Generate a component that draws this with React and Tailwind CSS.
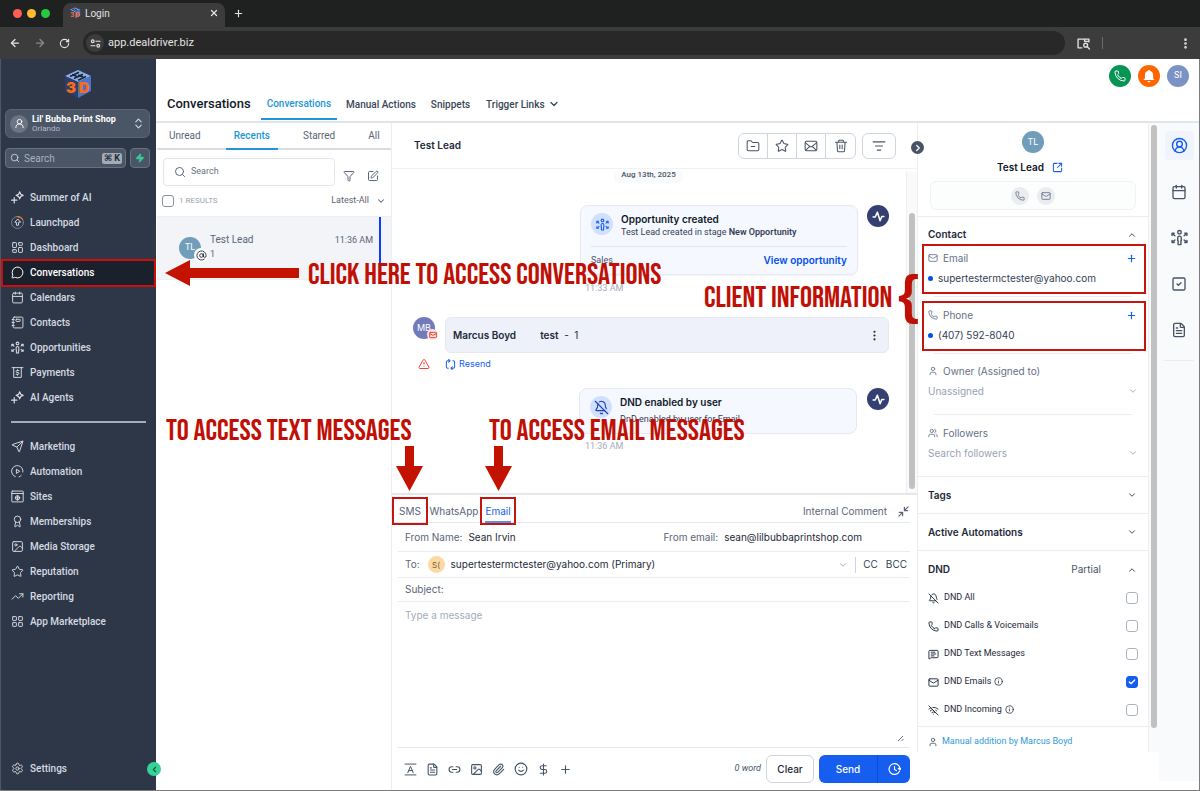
import {
    ArrowLeft, ArrowRight, AtSign, Award, BellOff, Calendar, Check, ChevronDown, ChevronLeft, ChevronRight, ChevronUp,
    ChevronsUpDown, CircleUserRound, DollarSign, EllipsisVertical, FileText, FolderMinus, Funnel,
    Image, Info, LayoutDashboard, LayoutGrid, Link2, ListFilter, Mail, MessageCircle, MessageSquareText,
    Paperclip, Phone, Plus, RotateCw, Search, Send, Settings, Smile, SquareArrowOutUpRight, SquareCheck, SquarePen,
    Star, TrendingUp, TriangleAlert, User, UserRound, Users, WifiOff, X, Zap
} from "lucide-react";

function Icon({ children, size = 13, className = "" }) {
    return (
        <svg width={size} height={size} viewBox="0 0 24 24" fill="none" stroke="currentColor" strokeWidth="1.8" strokeLinecap="round" strokeLinejoin="round" className={className}>
            {children}
        </svg>
    );
}

const SparkIcon = (props) => (
    <Icon {...props}>
        <path d="M16 1.500l2 4.500 4.500 2-4.500 2-2 4.500-2-4.500-4.500-2 4.500-2z" strokeWidth="2.200" />
        <path d="M6 12v10M1 17h10" strokeWidth="2.200" />
    </Icon>
);

const LaunchIcon = (props) => (
    <Icon {...props}>
        <circle cx="12" cy="12" r="11" stroke="#7a8594" />
        <path d="M12 1a11 11 0 0 1 9.500 5.500" stroke="#e07b39" strokeWidth="2.200" />
        <path d="M12 6l-5 5.500h3v5.500h4v-5.500h3z" />
    </Icon>
);

const PeopleIcon = (props) => (
    <Icon {...props}>
        <circle cx="12" cy="4.500" r="2.500" strokeWidth="2" />
        <path d="M12 10a2.500 2.500 0 0 1 2.500 2.500v4H14V22h-4v-5.500h-.5v-4A2.500 2.500 0 0 1 12 10z" strokeWidth="2" />
        <path d="M5.500 9.500L2 6.500M1.500 9V6H4.500M18.500 9.500L22 6.500M22.500 9V6H19.500M5.500 15.500L2 18.500M1.500 16v3H4.500M18.500 15.500L22 18.500M22.500 16v3H19.500" strokeWidth="2" />
    </Icon>
);

const NotebookIcon = (props) => (
    <Icon {...props}>
        <rect x="4" y="2" width="18" height="20" rx="2" />
        <rect x="9" y="6" width="8" height="4" rx="1" />
        <path d="M2 6.500h4M2 12h4M2 17.500h4" />
    </Icon>
);

const PaymentIcon = (props) => (
    <Icon {...props}>
        <path d="M2 3h20M5 3v18h14V3" />
        <path d="M14.500 8.500h-3.500a1.700 1.700 0 0 0 0 3.400h2a1.700 1.700 0 0 1 0 3.400H9.500M12 7v1.500M12 15.500V17" />
    </Icon>
);

const PlayIcon = (props) => (
    <Icon {...props}>
        <path d="M8 21.500A10.500 10.500 0 1 1 22 13M15 22a10 10 0 0 0 4-3" />
        <path d="M10 8.500v7l5.500-3.500z" />
    </Icon>
);

const SiteIcon = (props) => (
    <Icon {...props}>
        <rect x="1.500" y="2" width="21" height="20" rx="1" />
        <path d="M1.500 6.500h21" />
        <circle cx="12" cy="14.500" r="4" />
        <path d="M8 14.500h8M12 10.500v8" />
    </Icon>
);

const TabSearchIcon = (props) => (
    <Icon {...props}>
        <path d="M9 20H2V4h20v5M14 4v4h8" strokeWidth="2.500" />
        <circle cx="16" cy="15" r="3.500" strokeWidth="2.500" />
        <path d="M19 18l4 4" strokeWidth="2.500" />
    </Icon>
);

const TuneIcon = (props) => (
    <Icon {...props}>
        <circle cx="6" cy="7" r="3" strokeWidth="2.500" />
        <circle cx="18" cy="17" r="3" strokeWidth="2.500" />
        <path d="M13 7h9M2 17h9" strokeWidth="2.500" />
    </Icon>
);

const TextFormatIcon = (props) => (
    <Icon {...props}>
        <path d="M2 2h20M2 22h20M7 18l5-12 5 12M8.700 14h6.600" />
    </Icon>
);

const EnvelopeIcon = (props) => (
    <Icon {...props}>
        <rect x="2" y="4" width="20" height="16" rx="2.500" />
        <path d="M2.500 6.500l7.500 6a3 3 0 0 0 4 0l7.500-6M3 19l6.500-6M21 19l-6.500-6" />
    </Icon>
);

const BinIcon = (props) => (
    <Icon {...props}>
        <path d="M2.500 5.500h19M8 5.500V3a1 1 0 0 1 1-1h6a1 1 0 0 1 1 1v2.500M5 5.500l1 14.500a2 2 0 0 0 2 2h8a2 2 0 0 0 2-2l1-14.500M10 10.500v6M14 10.500v6" />
    </Icon>
);

const ResendIcon = (props) => (
    <Icon {...props}>
        <path d="M10 4H6a3 3 0 0 0-3 3v10a3 3 0 0 0 3 3h1M14 20h4a3 3 0 0 0 3-3V7a3 3 0 0 0-3-3h-1" strokeWidth="2.200" />
        <path d="M8 1l3 3-3 3M16 17l-3 3 3 3" strokeWidth="2.200" />
    </Icon>
);

const ShrinkIcon = (props) => (
    <Icon {...props}>
        <path d="M22 2l-7 7M2 22l7-7" strokeWidth="2.500" />
        <path d="M14 3v7h7M3 14h7v7" strokeWidth="2.800" />
    </Icon>
);

const ScheduleIcon = (props) => (
    <Icon {...props}>
        <path d="M21 15.500A10 10 0 1 1 22 11M12 6.500V12l3.500 2M19 10l3 2.500L24 9.500" strokeWidth="2.200" />
    </Icon>
);

const PulseIcon = (props) => (
    <Icon {...props}>
        <path d="M2 13h4l4-9 5 16 3-8h4" strokeWidth="2.800" />
    </Icon>
);

function Logo({ size }) {
    return (
        <svg width={size} height={size} viewBox="0 0 30 30">
            <path d="M15 1L28 7v15L15 29 2 22V7z" fill="#1f3c78" />
            <path d="M15 1L28 7 15 13 2 7z" fill="#8eb0e6" />
            <path d="M15 13L28 7v15L15 29z" fill="#4a76c4" />
            <path d="M2 7l13 6v16L2 22z" fill="#2a3f6b" />
            <path d="M7 7.500l9-4.200M11 9.500l9-4.200M15 11.300l8-3.800M9 5.500l5 2M15 6l5 2" stroke="#1c2536" strokeWidth="1.700" />
            <text x="3" y="24" fontSize="15" fontWeight="900" fontFamily="Inter, sans-serif" fill="#ff6a13">3</text>
            <text x="15.500" y="24" fontSize="15" fontWeight="900" fontFamily="Inter, sans-serif" fill="#ff6a13">D</text>
        </svg>
    );
}

const mainNav = [
    { label: "Summer of AI", icon: SparkIcon },
    { label: "Launchpad", icon: LaunchIcon },
    { label: "Dashboard", icon: LayoutDashboard },
    { label: "Conversations", icon: MessageCircle, active: true },
    { label: "Calendars", icon: Calendar },
    { label: "Contacts", icon: NotebookIcon },
    { label: "Opportunities", icon: PeopleIcon },
    { label: "Payments", icon: PaymentIcon },
    { label: "AI Agents", icon: SparkIcon },
];

const toolsNav = [
    { label: "Marketing", icon: Send },
    { label: "Automation", icon: PlayIcon },
    { label: "Sites", icon: SiteIcon },
    { label: "Memberships", icon: Award },
    { label: "Media Storage", icon: Image },
    { label: "Reputation", icon: Star },
    { label: "Reporting", icon: TrendingUp },
    { label: "App Marketplace", icon: LayoutGrid },
];

const dndRows = [
    { label: "DND All", icon: BellOff },
    { label: "DND Calls & Voicemails", icon: Phone },
    { label: "DND Text Messages", icon: MessageSquareText },
    { label: "DND Emails", icon: Mail, info: true, checked: true },
    { label: "DND Incoming", icon: WifiOff, info: true },
];

function BrowserBar() {
    return (
        <div className="bg-[#1f2120] text-[#e3e3e3] font-['Roboto',sans-serif]">
            <div className="flex h-[27px] items-end pl-[13px]">
                <div className="flex gap-[5px] pb-[9px]">
                    <span className="size-[9px] rounded-full bg-[#ff5f57]"></span>
                    <span className="size-[9px] rounded-full bg-[#febc2e]"></span>
                    <span className="size-[9px] rounded-full bg-[#28c840]"></span>
                </div>
                <div className="ml-[13px] flex h-6 w-[162px] items-center rounded-t-lg bg-[#3c3c3c] px-[6px] pb-1">
                    <Logo size={12} />
                    <span className="ml-[4px] flex-1 text-[10px]">Login</span>
                    <button aria-label="Close tab"><X size={10} strokeWidth={3} /></button>
                </div>
                <button aria-label="New tab" className="ml-[8px] pb-[8px]"><Plus size={11} strokeWidth={2.5} /></button>
            </div>
            <div className="flex h-8 items-center bg-[#3c3c3c] pr-[8px] pl-2">
                <button aria-label="Back" className="px-px"><ArrowLeft size={12} strokeWidth={2.5} /></button>
                <button aria-label="Forward" className="ml-[12px] text-[#8b8b8b]"><ArrowRight size={12} strokeWidth={2.5} /></button>
                <button aria-label="Reload" className="ml-[13px]"><RotateCw size={11} strokeWidth={2.5} /></button>
                <div className="ml-[13px] flex h-6 flex-1 items-center gap-[4px] rounded-full bg-[#282828] pl-[3px]">
                    <span className="flex size-[18px] items-center justify-center rounded-full bg-[#3c3c3c]"><TuneIcon size={11} /></span>
                    <span className="text-[11px]">app.dealdriver.biz</span>
                </div>
                <button aria-label="Search tabs" className="ml-3"><TabSearchIcon size={13} /></button>
                <span className="ml-3 h-3 w-px bg-[#6b6b6b]"></span>
                <button aria-label="Menu" className="ml-[76px]"><EllipsisVertical size={13} strokeWidth={3} /></button>
            </div>
        </div>
    );
}

function NavItem({ item }) {
    const NavIcon = item.icon;
    return (
        <a href="#" className={item.active ? "relative flex h-[25px] items-center text-white" : "relative flex h-[25px] items-center text-[#d5dae1]"}>
            {item.active && <span className="absolute inset-x-0 -top-px -bottom-0.5 border-2 border-[#cc0f0a] bg-[#1a202c]"></span>}
            <span className="relative flex items-center gap-[6px] pl-[10px]">
                <NavIcon size={13} strokeWidth={1.8} />
                <span className="text-[10px] font-medium">{item.label}</span>
            </span>
        </a>
    );
}

function Sidebar() {
    return (
        <nav className="relative flex w-[156px] shrink-0 flex-col border-l border-[#4c5768] bg-[#2d3748] font-['Roboto',sans-serif]">
            <div className="flex justify-center pt-[10px] pr-px"><Logo size={30} /></div>
            <button className="mt-[10px] mr-[6px] ml-1 flex h-[29px] items-center rounded-md border border-[#5a6473] bg-[#4a5565] px-1 text-left">
                <span className="flex size-[18px] items-center justify-center rounded-full bg-[#6b7482] text-white"><UserRound size={11} /></span>
                <span className="ml-1 flex flex-1 flex-col">
                    <span className="text-[9px] leading-[10px] font-bold text-white">Lil' Bubba Print Shop</span>
                    <span className="text-[8px] leading-[10px] text-[#b4bbc5]">Orlando</span>
                </span>
                <ChevronsUpDown size={13} className="text-[#d5dae1]" />
            </button>
            <div className="mt-[10px] mr-[6px] ml-1 flex gap-1">
                <label className="flex h-5 flex-1 items-center rounded border border-[#677180] bg-[#4a5565] pr-[3px] pl-1">
                    <Search size={10} className="text-[#d5dae1]" />
                    <input aria-label="Search menu" placeholder="Search" className="ml-1 w-0 flex-1 bg-transparent text-[10px] outline-none placeholder:text-[#a9b1bc]" />
                    <kbd className="rounded-xs bg-[#a3abb7] px-[2px] font-['Roboto','DejaVu_Sans',sans-serif] text-[9px] leading-[11px] font-bold text-[#1f2937]">⌘ K</kbd>
                </label>
                <button aria-label="Quick actions" className="flex size-5 items-center justify-center rounded border border-[#677180] bg-[#4a5565] text-[#35d399]"><Zap size={10} fill="currentColor" /></button>
            </div>
            <div className="mt-[17px]">
                {mainNav.map((item) => <NavItem item={item} key={item.label} />)}
            </div>
            <hr className="mx-[10px] my-[11px] border-t-2 border-[#a5adb9]" />
            <div>
                {toolsNav.map((item) => <NavItem item={item} key={item.label} />)}
            </div>
            <div className="mt-auto pb-[9px]">
                <NavItem item={{ label: "Settings", icon: Settings }} />
            </div>
            <button aria-label="Collapse menu" className="absolute -right-[5px] bottom-[14px] z-10 flex size-[14px] items-center justify-center rounded-full bg-[#35d399] text-[#14532d]">
                <ChevronLeft size={9} strokeWidth={3} />
            </button>
        </nav>
    );
}

function TopHeader() {
    return (
        <header className="flex h-16 shrink-0 justify-between border-b-2 border-[#dfe5e8] pr-[10px] pl-[11px] font-['Roboto',sans-serif]">
            <div className="mb-px flex h-8 items-center self-end text-[10px] font-medium text-[#3a4657]">
                <h1 className="text-[13px] text-[#111827]">Conversations</h1>
                <a href="#" className="ml-[10px] flex h-8 items-center border-b-2 border-[#2196d9] px-[6px] text-[#2196d9]">Conversations</a>
                <a href="#" className="ml-[9px]">Manual Actions</a>
                <a href="#" className="ml-[15px]">Snippets</a>
                <button className="ml-[16px] flex items-center gap-[3px]">Trigger Links <ChevronDown size={12} strokeWidth={2.5} /></button>
            </div>
            <div className="flex gap-[7px] pt-[6px] text-white">
                <button aria-label="Call" className="flex size-[22px] items-center justify-center rounded-full bg-[#079455]"><Phone size={12} /></button>
                <button aria-label="Notifications" className="flex size-[22px] items-center justify-center rounded-full bg-[#ff6600]">
                    <svg width="14" height="14" viewBox="0 0 24 24" fill="currentColor">
                        <path d="M12 1.500a2 2 0 0 0-2 2A7 7 0 0 0 5 10v6l-2.500 3h19L19 16v-6a7 7 0 0 0-5-6.500 2 2 0 0 0-2-2zM9.500 20.500a2.500 2.500 0 0 0 5 0z" />
                    </svg>
                </button>
                <button className="flex size-[22px] items-center justify-center rounded-full bg-[#7b93c4] text-[9px]">SI</button>
            </div>
        </header>
    );
}

function ConversationList() {
    return (
        <section className="w-[236px] shrink-0 border-r border-[#eceef2] pl-px font-['Roboto',sans-serif] text-[#5a6577]">
            <div className="flex h-[27px] gap-[25px] border-b-2 border-[#d8dbe2] pl-[12px] text-[10px]">
                <button className="self-center">Unread</button>
                <button className="-mb-0.5 border-b-2 border-[#2196d9] px-[8px] font-medium text-[#2196d9]">Recents</button>
                <button className="self-center">Starred</button>
                <button className="ml-2 self-center">All</button>
            </div>
            <div className="flex items-end pt-2 pr-[12px] pl-[6px]">
                <label className="flex h-7 flex-1 items-center rounded border border-[#e2e5ea] pl-[10px]">
                    <Search size={12} />
                    <input aria-label="Search conversations" placeholder="Search" className="ml-[5px] w-0 flex-1 text-[9px] outline-none placeholder:text-[#6b7280]" />
                </label>
                <button aria-label="Filter" className="ml-[8px] pb-1"><Funnel size={12} /></button>
                <button aria-label="New conversation" className="ml-[12px] pb-1"><SquarePen size={12} /></button>
            </div>
            <div className="flex h-[30px] items-center px-[5px] text-[9px]">
                <input id="all" type="checkbox" className="size-3 appearance-none rounded-[3px] border border-[#8a93a3]" />
                <label htmlFor="all" className="ml-[5px] flex-1 text-[8px] text-[#9ca3af]">1 RESULTS</label>
                <button className="flex items-center gap-[7px]">Latest-All <ChevronDown size={10} strokeWidth={2.5} /></button>
            </div>
            <div className="flex h-16 items-start border-y border-[#eceef2] bg-[#f2f4f8] pl-[22px] text-[9px]">
                <div className="relative mt-5 flex size-[22px] items-center justify-center rounded-full bg-[#709dba] text-[9px] text-white">
                    TL
                    <span className="absolute top-[11px] left-[15px] flex size-[14px] items-center justify-center rounded-full bg-white text-[#1f2937]"><AtSign size={11} /></span>
                </div>
                <div className="ml-[9px] flex flex-1 flex-col pt-4 leading-[14px]">
                    <span className="text-[10px]">Test Lead</span>
                    <span>1</span>
                </div>
                <span className="pt-4 pr-[6px] leading-[14px]">11:36 AM</span>
                <span className="mr-[10px] h-[47px] w-0.5 bg-[#0a3cff]"></span>
            </div>
        </section>
    );
}

function ToolButton({ label, icon: ToolIcon }) {
    return (
        <button aria-label={label} className="flex w-[29px] items-center justify-center"><ToolIcon size={14} strokeWidth={1.8} /></button>
    );
}

function Messages() {
    return (
        <div className="relative mt-[3px] h-[321px] shrink-0 overflow-hidden pr-[12px]">
            <div className="-mt-[5px] flex justify-center">
                <span className="rounded bg-[#f9fafb] px-[7px] py-[2px] font-['Roboto',sans-serif] text-[8px] leading-3 font-medium text-[#4b5666]">Aug 13th, 2025</span>
            </div>
            <div className="mt-[22px] mr-4 ml-auto flex w-[309px] items-start gap-[9px]">
                <div className="flex-1 rounded-lg border border-[#e6e9f0] bg-[#f5f8ff] px-[10px] pt-[7px] shadow-xs">
                    <div className="flex gap-2 border-b border-[#e1e5ec] pb-[7px]">
                        <span className="flex size-[22px] items-center justify-center rounded-full bg-[#d1e0ff] text-[#155eef]"><PeopleIcon size={13} /></span>
                        <div className="leading-[13px]">
                            <p className="text-[10px] font-semibold text-[#101828]">Opportunity created</p>
                            <p className="font-['Roboto',sans-serif] text-[9px] text-[#344054]">Test Lead created in stage <b className="font-semibold">New Opportunity</b></p>
                        </div>
                    </div>
                    <div className="flex h-[27px] items-center justify-between">
                        <span className="font-['Roboto',sans-serif] text-[9px] text-[#475467]">Sales</span>
                        <a href="#" className="text-[10px] font-semibold text-[#004eeb]">View opportunity</a>
                    </div>
                </div>
                <span className="flex size-[22px] items-center justify-center rounded-full bg-[#363f72] text-white"><PulseIcon size={13} /></span>
            </div>
            <p className="mt-[7px] ml-[193px] font-['Roboto',sans-serif] text-[9px] leading-3 text-[#a3abb8]">11:33 AM</p>

            <div className="mt-[23px] flex gap-[10px] pr-[16px] pl-[21px]">
                <div className="relative flex size-[22px] items-center justify-center rounded-full bg-[#717bbc] text-[9px] text-white">
                    MB
                    <span className="absolute top-[12px] left-[14px] flex size-[11px] items-center justify-center rounded-full bg-[#fee4e2] text-[#f04438]"><Mail size={8} strokeWidth={3} /></span>
                </div>
                <div className="flex h-9 flex-1 items-center rounded-md border border-[#e6e9f0] bg-[#eef1fa] px-[7px] text-[10px] text-[#1d2939]">
                    <b className="font-semibold">Marcus Boyd</b>
                    <span className="ml-6 flex-1"><b className="font-semibold">test</b> &nbsp;-&nbsp; 1</span>
                    <button aria-label="Message menu"><EllipsisVertical size={13} /></button>
                </div>
            </div>
            <div className="mt-[3px] flex h-4 items-center pl-[26px]">
                <TriangleAlert size={12} className="text-[#f04438]" />
                <button className="ml-[15px] flex items-center gap-[3px] text-[9px] text-[#155eef]"><ResendIcon size={11} /> Resend</button>
            </div>

            <div className="mt-[16px] mr-4 ml-auto flex w-[310px] items-start gap-[10px]">
                <div className="flex h-[46px] flex-1 gap-2 rounded-lg border border-[#e6e9f0] bg-[#f5f8ff] px-[10px] pt-[7px]">
                    <span className="flex size-[22px] items-center justify-center rounded-full bg-[#d1e0ff] text-[#1d3fbb]"><BellOff size={15} strokeWidth={1.8} /></span>
                    <div className="flex flex-col gap-[4px] leading-[13px]">
                        <p className="text-[10px] font-semibold text-[#101828]">DND enabled by user</p>
                        <p className="font-['Roboto',sans-serif] text-[9px] text-[#344054]">DnD enabled by user for Email</p>
                    </div>
                </div>
                <span className="flex size-[22px] items-center justify-center rounded-full bg-[#363f72] text-white"><PulseIcon size={13} /></span>
            </div>
            <p className="mt-[6px] ml-[193px] font-['Roboto',sans-serif] text-[9px] leading-3 text-[#a3abb8]">11:36 AM</p>
            <div className="absolute top-0 right-0 h-full w-[11px] border-l border-[#eceef1] bg-[#fafafa] px-[2px] pt-[41px] pb-1">
                <div className="h-full rounded-full bg-[#c1c1c1]"></div>
            </div>
        </div>
    );
}

function Composer() {
    return (
        <div className="flex flex-1 flex-col border-t-2 border-[#e4e7ec] text-[10px] text-[#344054]">
            <div className="mr-[7px] flex h-7 items-start border-b border-[#e4e7ec] pt-0.5 text-[#5a6577]">
                <button className="h-[28px] w-9 border-2 border-[#c4160f]">SMS</button>
                <button className="h-[28px] w-[52px]">WhatsApp</button>
                <button className="h-[28px] w-9 border-2 border-[#c4160f] text-[#155eef]"><span className="border-b-2 border-[#5b8def] pb-[4px]">Email</span></button>
                <button className="mr-[11px] ml-auto h-[28px]">Internal Comment</button>
                <button aria-label="Shrink" className="h-[28px] pr-px"><ShrinkIcon size={11} /></button>
            </div>
            <div className="mr-[7px] ml-[6px] flex h-[29px] items-center border-b border-[#eaecf0] pt-px pl-[7px]">
                <span className="text-[#5a6577]">From Name:</span>
                <span className="ml-[6px] text-[#1d2939]">Sean Irvin</span>
                <span className="ml-auto text-[#5a6577]">From email:</span>
                <span className="mr-[48px] ml-[6px] text-[#1d2939]">sean@lilbubbaprintshop.com</span>
            </div>
            <div className="mr-[7px] ml-[6px] flex h-[26px] items-center border-b border-[#eaecf0] pr-[3px] pl-[7px]">
                <span className="text-[#5a6577]">To:</span>
                <span className="ml-2 flex size-[17px] items-center justify-center rounded-full bg-[#fcd9a4] text-[8px] text-[#7a5a2c]">S(</span>
                <span className="ml-[6px] flex-1 text-[#1d2939]">supertestermctester@yahoo.com (Primary)</span>
                <ChevronDown size={10} className="text-[#98a2b3]" />
                <span className="mx-[7px] h-4 w-px bg-[#d0d5dd]"></span>
                <button>CC</button>
                <button className="ml-[8px]">BCC</button>
            </div>
            <label className="mr-[7px] ml-[6px] flex h-6 items-center border-b border-[#eaecf0] pl-[7px] text-[#5a6577]">
                Subject:
                <input className="ml-1 flex-1 outline-none" />
            </label>
            <div className="relative mr-[7px] ml-[6px] flex flex-1 border-b border-[#e4e7ec]">
                <textarea aria-label="Message" placeholder="Type a message" className="flex-1 resize-none px-[7px] pt-[6px] outline-none placeholder:text-[#a3abb8]"></textarea>
                <svg width="8" height="8" viewBox="0 0 8 8" className="absolute right-[5px] bottom-[5px]" stroke="#667085">
                    <path d="M1 7l5-5M4.500 7l2-2" />
                </svg>
            </div>
            <div className="mr-[7px] flex h-[42px] items-center pl-[12px] text-[#475467]">
                <div className="flex flex-1 gap-[9px]">
                    <button aria-label="Text style"><TextFormatIcon size={13} /></button>
                    <button aria-label="Template"><FileText size={13} /></button>
                    <button aria-label="Link"><Link2 size={13} /></button>
                    <button aria-label="Image"><Image size={13} /></button>
                    <button aria-label="Attach"><Paperclip size={13} /></button>
                    <button aria-label="Emoji"><Smile size={14} /></button>
                    <button aria-label="Payment"><DollarSign size={13} /></button>
                    <button aria-label="More"><Plus size={13} /></button>
                </div>
                <span className="mr-[5px] font-['Roboto',sans-serif] text-[9px] italic">0 word</span>
                <button className="h-7 w-12 rounded-md border border-[#d0d5dd] font-medium text-[#1d2939]">Clear</button>
                <div className="ml-[5px] flex h-7 rounded-md bg-[#155eef] text-white">
                    <button className="w-[58px] font-medium">Send</button>
                    <button aria-label="Schedule" className="flex w-[33px] items-center justify-center border-l border-[#004eeb]"><ScheduleIcon size={13} /></button>
                </div>
            </div>
        </div>
    );
}

function Chat() {
    return (
        <section className="flex min-w-0 flex-1 flex-col font-['Inter',sans-serif]">
            <div className="flex h-[46px] shrink-0 items-center border-b border-[#f0f1f4] pr-[21px] pl-[22px] text-[#475467]">
                <h2 className="flex-1 text-[10px] font-semibold text-[#1d2939]">Test Lead</h2>
                <div className="flex h-[26px] divide-x divide-[#d0d5dd] rounded-md border border-[#d0d5dd]">
                    <ToolButton label="Move to folder" icon={FolderMinus} />
                    <ToolButton label="Star" icon={Star} />
                    <ToolButton label="Mark unread" icon={EnvelopeIcon} />
                    <ToolButton label="Delete" icon={BinIcon} />
                </div>
                <button aria-label="Filter messages" className="ml-[6px] flex h-[26px] w-[34px] items-center justify-center rounded-md border border-[#d0d5dd]"><ListFilter size={14} /></button>
            </div>
            <Messages />
            <Composer />
        </section>
    );
}

function ContactField({ icon: FieldIcon, label, value }) {
    return (
        <div className="mr-[2px] ml-[4px] border-2 border-[#c4160f] pt-0.5 pr-[7px] pb-1 pl-1">
            <div className="flex h-5 items-center text-[#667085]">
                <FieldIcon size={10} />
                <span className="ml-[5px] flex-1">{label}</span>
                <button aria-label={"Add " + label} className="text-[#155eef]"><Plus size={11} strokeWidth={2.5} /></button>
            </div>
            <div className="flex h-5 items-center text-[#344054]">
                <span className="mr-[5px] size-[5px] rounded-full bg-[#004eeb]"></span>
                {value}
            </div>
        </div>
    );
}

function PersonField({ icon: FieldIcon, label, value }) {
    return (
        <div className="px-[10px] pt-[7px] pb-[13px]">
            <div className="flex h-5 items-center gap-[5px] text-[#667085]"><FieldIcon size={10} /> {label}</div>
            <button className="flex h-5 w-full items-center justify-between text-[#98a2b3]">{value} <ChevronDown size={10} /></button>
        </div>
    );
}

function Collapsed({ title }) {
    return (
        <button className="flex h-[37px] w-full items-center justify-between border-b border-[#eaecf0] pr-[11px] pl-[10px] font-semibold text-[#1d2939]">
            {title} <ChevronDown size={10} />
        </button>
    );
}

function ContactPanel() {
    return (
        <aside className="relative w-[242px] shrink-0 font-['Inter',sans-serif] text-[10px]">
            <div className="relative flex">
                <div className="flex-1 border-x border-[#eceef2] bg-white">
                    <div className="flex flex-col items-center pt-2">
                        <span className="flex size-[22px] items-center justify-center rounded-full bg-[#709dba] text-[9px] text-white">TL</span>
                        <div className="mt-[6px] flex h-4 items-center gap-2 pr-[6px] font-semibold text-[#101828]">
                            Test Lead
                            <a href="#" aria-label="Open contact" className="text-[#155eef]"><SquareArrowOutUpRight size={11} strokeWidth={2.2} /></a>
                        </div>
                    </div>
                    <div className="mx-[12px] mt-[6px] flex h-[29px] items-center justify-center gap-2 rounded-md border border-[#f0f2f4] bg-[#fcfdfd] text-[#667085]">
                        <button aria-label="Call contact" className="flex size-[18px] items-center justify-center rounded-full bg-[#ebecf0]"><Phone size={10} /></button>
                        <button aria-label="Email contact" className="flex size-[18px] items-center justify-center rounded-full bg-[#ebecf0]"><Mail size={10} /></button>
                    </div>
                    <button className="mt-[6px] flex h-7 w-full items-center justify-between border-t border-[#eaecf0] pt-2 pr-[11px] pl-[10px] font-semibold text-[#1d2939]">
                        Contact <ChevronUp size={10} />
                    </button>
                    <ContactField icon={Mail} label="Email" value="supertestermctester@yahoo.com" />
                    <hr className="mx-4 mt-0.5 mb-1 border-[#eaecf0]" />
                    <ContactField icon={Phone} label="Phone" value="(407) 592-8040" />
                    <hr className="mx-4 mt-0.5 border-[#eaecf0]" />
                    <PersonField icon={User} label="Owner (Assigned to)" value="Unassigned" />
                    <hr className="mx-4 mb-px border-[#eaecf0]" />
                    <PersonField icon={Users} label="Followers" value="Search followers" />
                    <div className="border-t border-[#eaecf0]">
                        <Collapsed title="Tags" />
                        <Collapsed title="Active Automations" />
                    </div>
                    <button className="flex h-[33px] w-full items-center pt-1 pr-[11px] pl-[10px] text-left text-[#1d2939]">
                        <span className="flex-1 font-semibold">DND</span>
                        <span className="mr-[26px] text-[#475467]">Partial</span>
                        <ChevronUp size={10} />
                    </button>
                    {dndRows.map(({ label, icon: RowIcon, info, checked }) => (
                        <label key={label} className="flex h-7 items-center px-[10px] font-['Roboto',sans-serif] text-[9px] text-[#1d2939]">
                            <RowIcon size={11} />
                            <span className="ml-[5px]">{label}</span>
                            {info && <Info size={9} className="mb-0.5 ml-[3px]" />}
                            <span className="relative ml-auto size-3">
                                <input type="checkbox" defaultChecked={checked} className="block size-3 appearance-none rounded-[3px] border border-[#aab3c3] checked:border-[#155eef] checked:bg-[#155eef]" />
                                {checked && <Check size={8} strokeWidth={4} className="absolute top-0.5 left-0.5 text-white" />}
                            </span>
                        </label>
                    ))}
                    <a href="#" className="mt-0.5 flex h-[26px] items-center gap-[4px] border-t border-[#eaecf0] pt-1 pl-[10px] font-['Roboto',sans-serif] text-[9px] text-[#2e9bd6]">
                        <User size={10} className="text-[#475467]" /> Manual addition by Marcus Boyd
                    </a>
                </div>
                <div className="w-[10px] bg-[#fafafa] px-[2px] pt-[2px] pb-6">
                    <div className="h-full rounded-full bg-[#c1c1c1]"></div>
                </div>
            </div>
            <button aria-label="Hide details" className="absolute top-[18px] -left-[6px] flex size-[13px] items-center justify-center rounded-full bg-[#475467] text-white"><ChevronRight size={10} strokeWidth={3} /></button>
        </aside>
    );
}

function IconRail() {
    return (
        <div className="mb-[9px] flex w-10 shrink-0 flex-col items-center bg-[#f9fafb] pt-2 text-[#475467]">
            <button aria-label="Contact" className="flex size-[29px] items-center justify-center rounded bg-[#eff4ff] text-[#155eef]"><CircleUserRound size={17} /></button>
            <button aria-label="Appointments" className="flex h-[46px] items-center pt-[17px]"><Calendar size={16} /></button>
            <button aria-label="Opportunities" className="flex h-[46px] items-center pt-[17px]"><PeopleIcon size={17} /></button>
            <button aria-label="Tasks" className="flex h-[46px] items-center pt-[17px]"><SquareCheck size={16} /></button>
            <button aria-label="Notes" className="flex h-[46px] items-center pt-[17px]"><FileText size={16} /></button>
            <hr className="mt-[16px] w-[30px] border-[#eaecf0]" />
        </div>
    );
}

function Callouts() {
    return (
        <div className="pointer-events-none absolute inset-0 font-['Bebas_Neue','Liberation_Sans_Narrow','Roboto_Condensed','Liberation_Sans',sans-serif] text-[30px] leading-7 whitespace-nowrap text-[#c01005]">
            <svg className="absolute top-[260px] left-[165px]" width="134" height="27" fill="#c41200"><path d="M0 13L25 0v8h109v10H25v8z" /></svg>
            <p className="absolute top-[261px] left-[308px]">CLICK HERE TO ACCESS CONVERSATIONS</p>
            <p className="absolute top-[284px] left-[704px]">CLIENT INFORMATION</p>
            <p className="absolute top-[417px] left-[166px]">TO ACCESS TEXT MESSAGES</p>
            <p className="absolute top-[417px] left-[489px]">TO ACCESS EMAIL MESSAGES</p>
            <svg className="absolute top-[446px] left-[396px]" width="27" height="45" fill="#c41200"><path d="M9 0h9v20h9L13.500 45 0 20h9z" /></svg>
            <svg className="absolute top-[446px] left-[485px]" width="27" height="45" fill="#c41200"><path d="M9 0h9v20h9L13.500 45 0 20h9z" /></svg>
            <p className="absolute top-[265px] left-[898px] font-['Liberation_Sans',sans-serif] text-[54px] leading-[58px] font-bold">{"{"}</p>
        </div>
    );
}

export default function App() {
    return (
        <div className="relative flex h-screen flex-col overflow-hidden bg-white">
            <BrowserBar />
            <div className="flex min-h-0 flex-1 border-r border-b border-[#7c7c7c]">
                <Sidebar />
                <main className="flex min-w-0 flex-1 flex-col">
                    <TopHeader />
                    <div className="flex min-h-0 flex-1">
                        <ConversationList />
                        <Chat />
                        <ContactPanel />
                        <IconRail />
                    </div>
                </main>
            </div>
            <Callouts />
        </div>
    );
}
